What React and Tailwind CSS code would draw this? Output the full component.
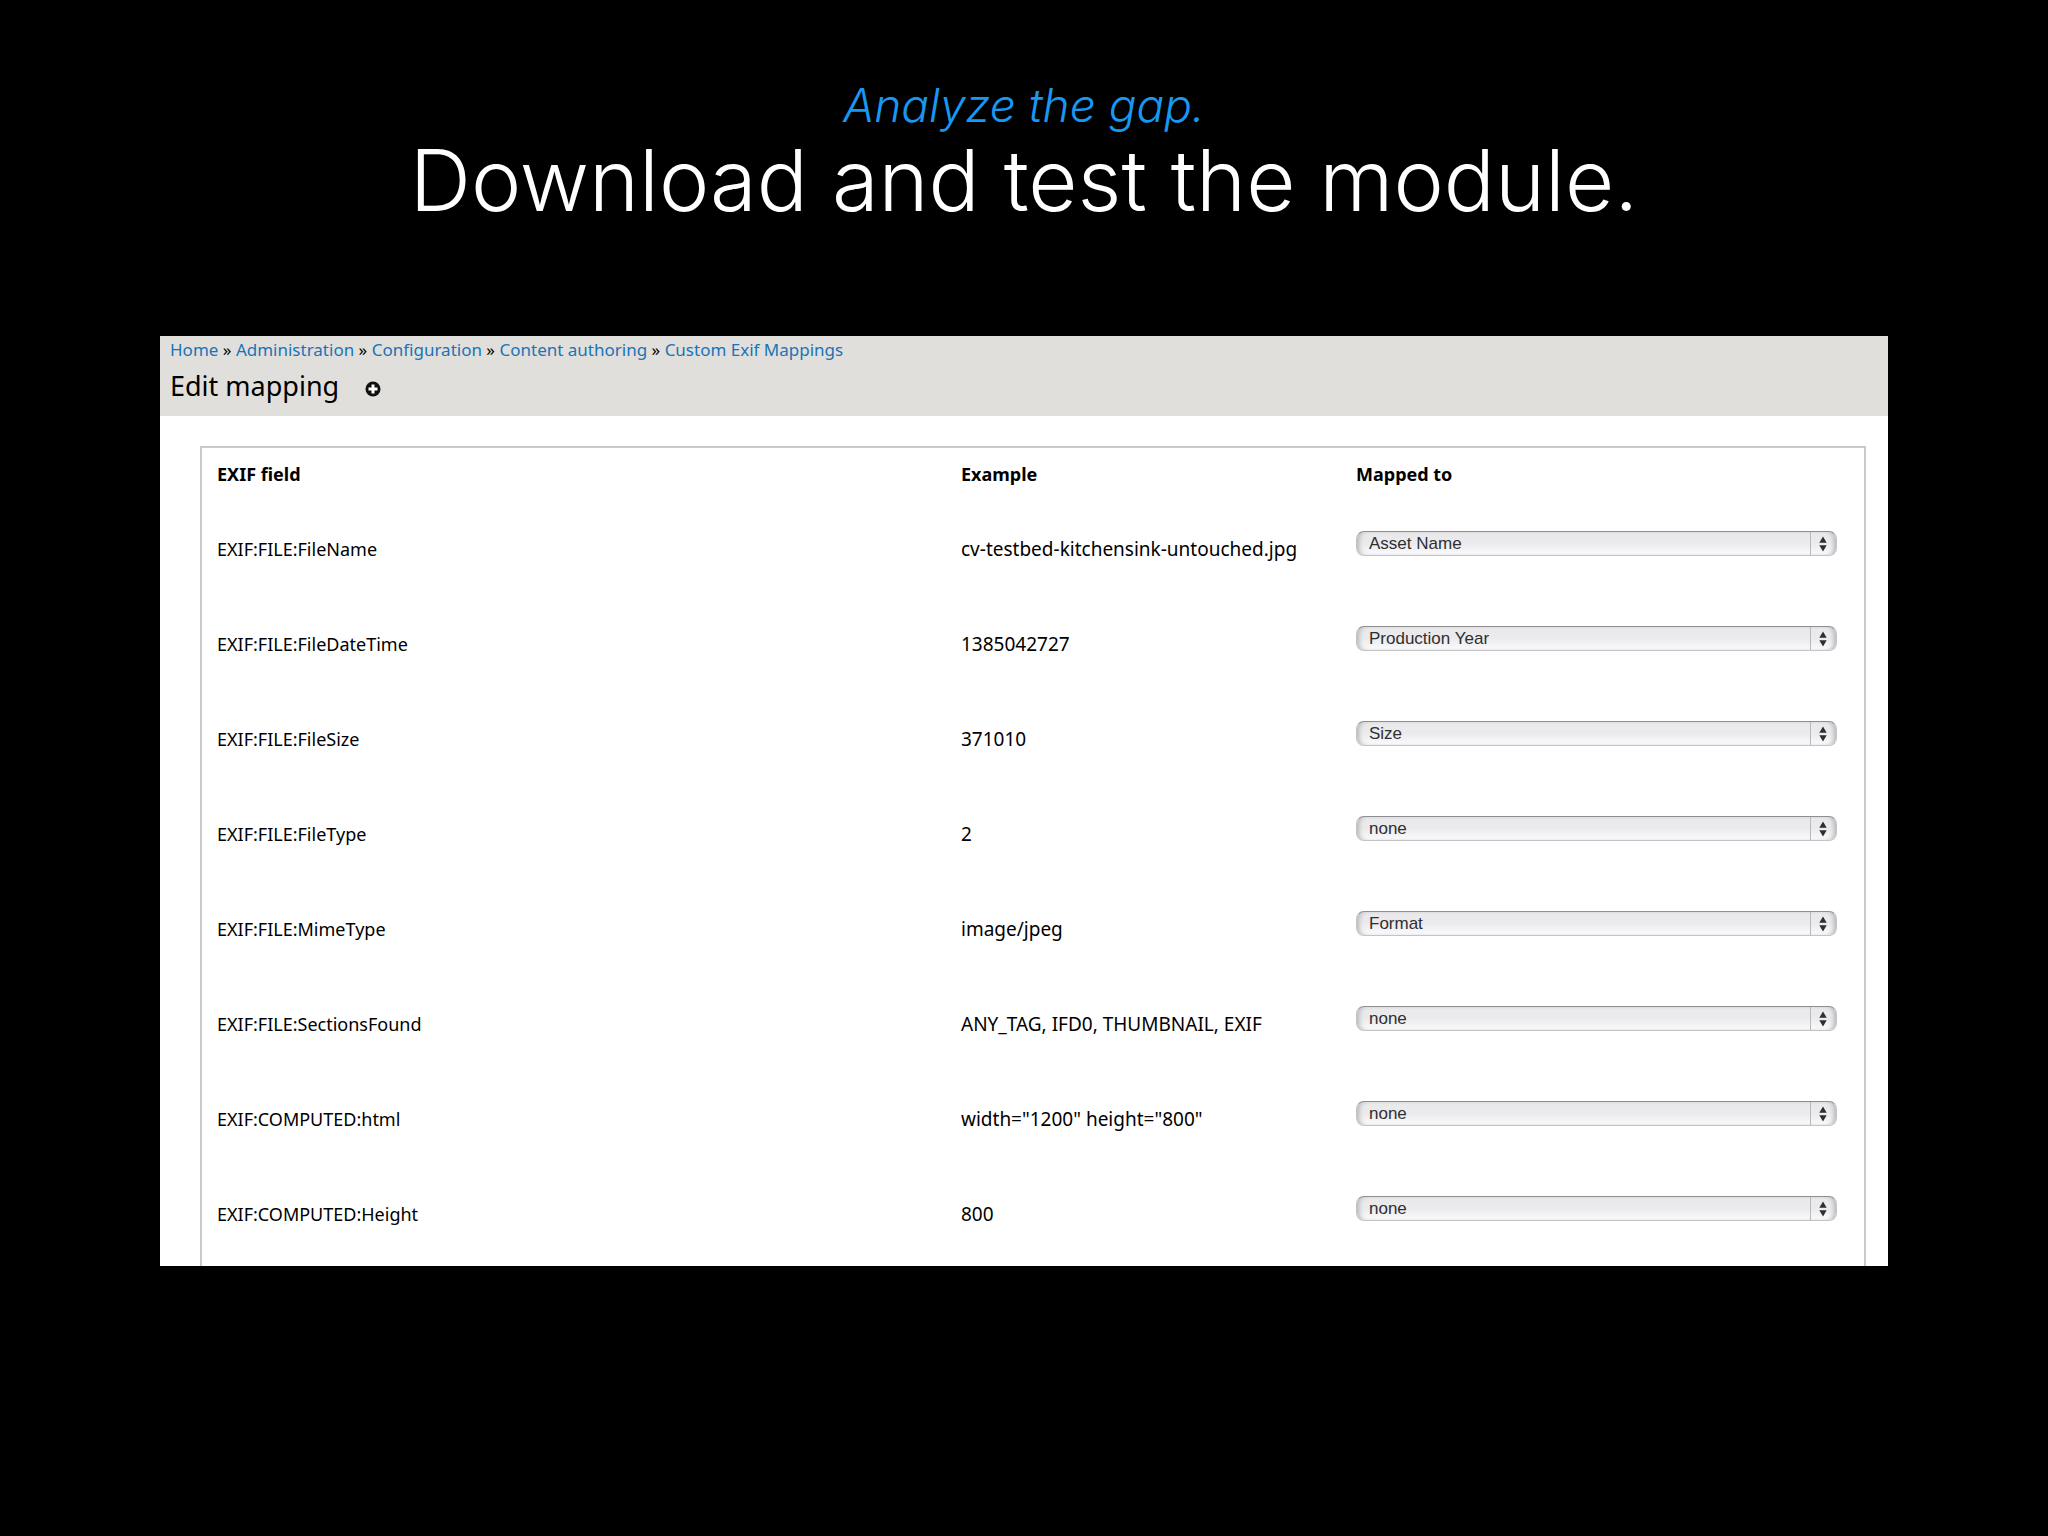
const crumbs = [
    "Home",
    "Administration",
    "Configuration",
    "Content authoring",
    "Custom Exif Mappings",
];

const targets = ["none", "Asset Name", "Production Year", "Size", "Format"];

const rows = [
    { field: "EXIF:FILE:FileName", example: "cv-testbed-kitchensink-untouched.jpg", target: "Asset Name" },
    { field: "EXIF:FILE:FileDateTime", example: "1385042727", target: "Production Year" },
    { field: "EXIF:FILE:FileSize", example: "371010", target: "Size" },
    { field: "EXIF:FILE:FileType", example: "2", target: "none" },
    { field: "EXIF:FILE:MimeType", example: "image/jpeg", target: "Format" },
    { field: "EXIF:FILE:SectionsFound", example: "ANY_TAG, IFD0, THUMBNAIL, EXIF", target: "none" },
    { field: "EXIF:COMPUTED:html", example: 'width="1200" height="800"', target: "none" },
    { field: "EXIF:COMPUTED:Height", example: "800", target: "none" },
];

function TargetSelect({ label, value }) {
    return (
        <div className="relative">
            <select
                aria-label={label}
                defaultValue={value}
                className="block h-[25px] w-full appearance-none rounded-lg border border-[#c4c3c6] border-t-[#8f8e91] bg-linear-to-b from-[#e9e8ea] via-[#ebeaec] to-[#fbfafc] pl-3 pr-8 font-['Liberation_Sans',Arial,sans-serif] text-[17px] leading-[20px] text-[#2f2f31] shadow-[inset_5px_0_5px_-3px_#b5b4b8,inset_-5px_0_5px_-3px_#b5b4b8]"
            >
                {targets.map((target) => (
                    <option key={target}>{target}</option>
                ))}
            </select>
            <span className="pointer-events-none absolute inset-y-px right-0 flex w-[27px] items-center border-l border-[#b9b8bb] pl-2">
                <svg viewBox="0 0 8 16" className="h-4 w-2" fill="#2f2f31" aria-hidden="true">
                    <path d="M4 0.5 7.7 6.7H0.3zM4 15.5 0.3 9.3h7.4z" />
                </svg>
            </span>
        </div>
    );
}

function PanelHeader() {
    return (
        <header className="h-20 bg-[#e1dfdb] px-2.5">
            <nav aria-label="Breadcrumb" className="pt-0.5 text-[17px] leading-[24px]">
                {crumbs.map((crumb, i) => (
                    <span key={crumb}>
                        {i > 0 && " » "}
                        <a href="#" className="text-[#1874b8]">
                            {crumb}
                        </a>
                    </span>
                ))}
            </nav>
            <div className="flex items-center gap-[26px]">
                <h2 className="text-[27px] leading-[48px]">Edit mapping</h2>
                <button type="button" aria-label="Add shortcut" className="mt-1.5">
                    <svg viewBox="0 0 16 16" className="h-4 w-4" aria-hidden="true">
                        <circle cx="8" cy="8" r="7.5" fill="#111" />
                        <path d="M8 3.5v9M3.5 8h9" stroke="#fff" strokeWidth="3" />
                    </svg>
                </button>
            </div>
        </header>
    );
}

function MappingTable() {
    return (
        <div className="border-2 border-b-0 border-[#c9c9c9] pl-[15px] pr-[27px]">
            <table className="w-full table-fixed text-left text-[18px] leading-[24px]">
                <colgroup>
                    <col />
                    <col className="w-[395px]" />
                    <col className="w-[481px]" />
                </colgroup>
                <thead>
                    <tr className="h-[58px] align-top">
                        <th className="pt-3.5">EXIF field</th>
                        <th className="pt-3.5">Example</th>
                        <th className="pt-3.5">Mapped to</th>
                    </tr>
                </thead>
                <tbody>
                    {rows.map((row) => (
                        <tr key={row.field} className="h-[95px] align-top">
                            <td className="pt-[31px]">{row.field}</td>
                            <td className="pt-[31px] text-[19px]">{row.example}</td>
                            <td className="pt-[25px]">
                                <TargetSelect label={`Map ${row.field} to`} value={row.target} />
                            </td>
                        </tr>
                    ))}
                </tbody>
            </table>
        </div>
    );
}

function App() {
    return (
        <main className="min-h-screen bg-black px-40 pt-[81px]">
            <div className="text-center font-[Inter,'Liberation_Sans',sans-serif] font-light">
                <p className="text-[46px] leading-[48px] text-[#1798f2] italic">Analyze the gap.</p>
                <h1 className="text-[85px] leading-[104px] text-white">Download and test the module.</h1>
            </div>

            <section className="mt-[103px] overflow-hidden bg-white font-['Noto_Sans','Open_Sans',sans-serif] text-black">
                <PanelHeader />
                <div className="pt-[30px] pr-[22px] pl-10">
                    <MappingTable />
                </div>
            </section>
        </main>
    );
}

export default App;
